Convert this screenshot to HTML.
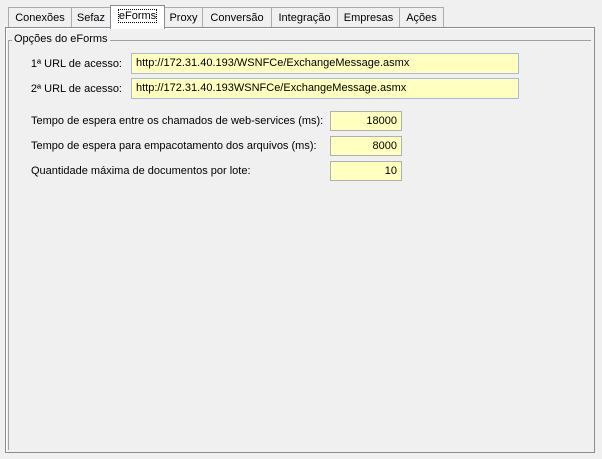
<!DOCTYPE html>
<html><head><style>
body{margin:0;width:602px;height:459px;background:#f0f0f0;font-family:"Liberation Sans",sans-serif;font-size:11px;color:#000;position:relative;overflow:hidden}
.a{position:absolute}
.tab{position:absolute;top:7px;height:20px;border:1px solid #acacac;border-bottom:none;background:#f0f0f0;box-sizing:border-box;text-align:center;line-height:20px;color:#000}
.panel{left:5px;top:27px;width:590px;height:426px;border:1px solid #898c95;box-sizing:border-box;background:#f0f0f0;box-shadow:inset 1px 1px 0 #fff}
.in{position:absolute;background:#ffffc0;box-sizing:border-box;line-height:19px;white-space:nowrap}
.url{border:1px solid #a9bcd6;padding-left:4px;left:131px;width:388px;height:21px}
.num{border:1px solid #b0b0b0;left:330px;width:72px;height:20px;text-align:right;padding-right:4px}
.lbl{position:absolute;white-space:nowrap}
</style></head><body>
<div class="a panel"></div>
<div class="tab" style="left:8px;width:64px">Conexões</div>
<div class="tab" style="left:71px;width:40px">Sefaz</div>
<div class="tab" style="left:164px;width:39px">Proxy</div>
<div class="tab" style="left:202px;width:70px">Conversão</div>
<div class="tab" style="left:271px;width:67px">Integração</div>
<div class="tab" style="left:337px;width:63px">Empresas</div>
<div class="tab" style="left:399px;width:45px">Ações</div>
<div class="tab" style="left:110px;top:5px;width:55px;height:24px;background:#fff;border-color:#898c95;line-height:20px"><span style="outline:1px dotted #000">eForms</span></div>
<div class="a" style="left:8px;top:40px;width:583px;height:1px;background:#a0a0a0"></div>
<div class="a" style="left:8px;top:40px;width:1px;height:410px;background:#a0a0a0"></div>
<div class="lbl" style="left:12px;top:33px;background:#f0f0f0;padding:0 2px;color:#000">Opções do eForms</div>
<div class="lbl" style="left:20px;top:58px;width:102px;text-align:right">1ª URL de acesso:</div>
<div class="in url" style="top:53px">http://172.31.40.193/WSNFCe/ExchangeMessage.asmx</div>
<div class="lbl" style="left:20px;top:83px;width:102px;text-align:right">2ª URL de acesso:</div>
<div class="in url" style="top:78px">http://172.31.40.193WSNFCe/ExchangeMessage.asmx</div>
<div class="lbl" style="left:31px;top:115px">Tempo de espera entre os chamados de web-services (ms):</div>
<div class="in num" style="top:111px">18000</div>
<div class="lbl" style="left:31px;top:140px">Tempo de espera para empacotamento dos arquivos (ms):</div>
<div class="in num" style="top:136px">8000</div>
<div class="lbl" style="left:31px;top:165px">Quantidade máxima de documentos por lote:</div>
<div class="in num" style="top:161px">10</div>
</body></html>
